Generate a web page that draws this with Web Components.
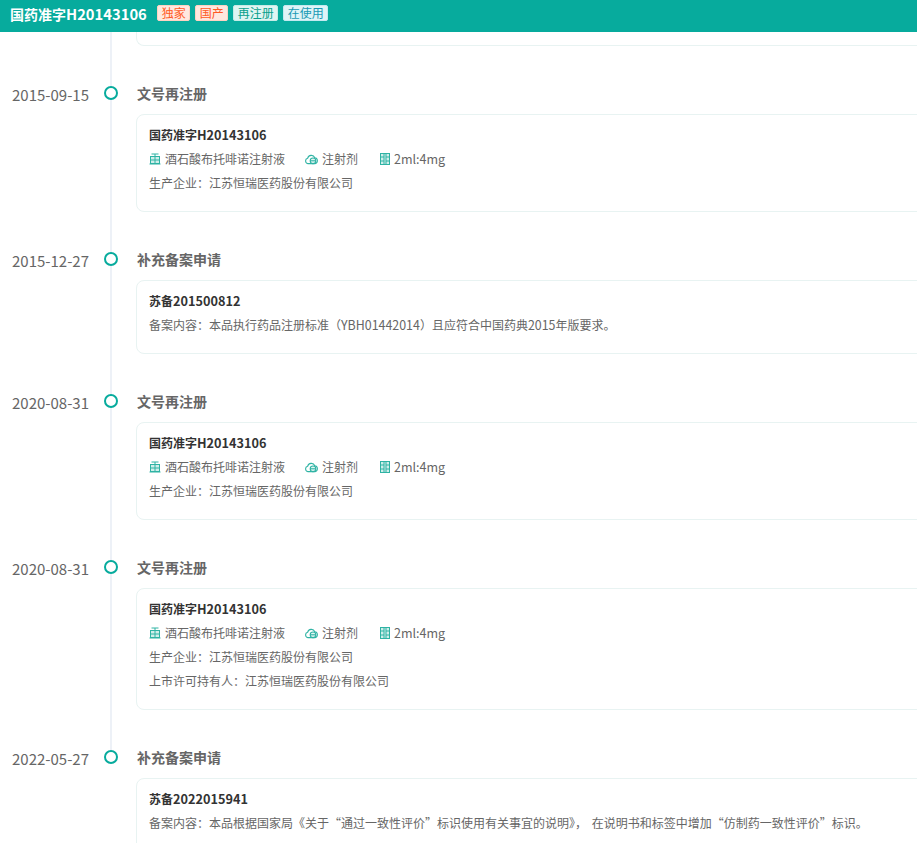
<!DOCTYPE html>
<html lang="zh"><head><meta charset="utf-8">
<style>
html,body{margin:0;padding:0;background:#fff;overflow:hidden}
body{width:917px;height:843px;font-family:"Noto Sans CJK SC","Open Sans",sans-serif;font-size:12px;color:#666;display:flex;flex-direction:column}
</style></head><body>
<app-header code="H20143106">
<x-tag kind="orange">独家</x-tag><x-tag kind="orange">国产</x-tag><x-tag kind="green">再注册</x-tag><x-tag kind="blue">在使用</x-tag>
</app-header>
<time-line>
<x-stub></x-stub>
<time-item date="2015-09-15" heading="文号再注册"><drug-card prefix="国药准字" code="H20143106" name="酒石酸布托啡诺注射液" form="注射剂" spec="2ml:4mg"><p-line>生产企业：江苏恒瑞医药股份有限公司</p-line></drug-card></time-item>
<time-item date="2015-12-27" heading="补充备案申请"><drug-card prefix="苏备" code="201500812"><p-line>备案内容：本品执行药品注册标准（<lat-n>YBH01442014</lat-n>）且应符合中国药典<lat-n>2015</lat-n>年版要求。</p-line></drug-card></time-item>
<time-item date="2020-08-31" heading="文号再注册"><drug-card prefix="国药准字" code="H20143106" name="酒石酸布托啡诺注射液" form="注射剂" spec="2ml:4mg"><p-line>生产企业：江苏恒瑞医药股份有限公司</p-line></drug-card></time-item>
<time-item date="2020-08-31" heading="文号再注册"><drug-card prefix="国药准字" code="H20143106" name="酒石酸布托啡诺注射液" form="注射剂" spec="2ml:4mg"><p-line>生产企业：江苏恒瑞医药股份有限公司</p-line><p-line>上市许可持有人：江苏恒瑞医药股份有限公司</p-line></drug-card></time-item>
<time-item date="2022-05-27" heading="补充备案申请"><drug-card prefix="苏备" code="2022015941"><p-line>备案内容：本品根据国家局《关于“通过一致性评价”标识使用有关事宜的说明》， 在说明书和标签中增加“仿制药一致性评价”标识。</p-line></drug-card></time-item>
</time-line>
<script>
const def=(n,html)=>customElements.define(n,class extends HTMLElement{
  connectedCallback(){ if(this.shadowRoot)return; const s=this.attachShadow({mode:'open'}); s.innerHTML=typeof html==='function'?html(this):html; }
});
def('lat-n',`<style>:host{display:inline;font-size:1.035em}</style><slot></slot>`);
def('app-header',e=>`<style>:host{display:flex;flex:none;height:32px;background:#07ab9d;align-items:center;padding:0 10px 4px;gap:10px;box-sizing:border-box}
b{font-size:14px;font-weight:700;color:#fff;line-height:20px;white-space:nowrap}
b span{font-size:14.75px}
div{display:flex;gap:5px;align-items:center;margin-top:-2px;padding-left:.5px}</style><b>国药准字<span>${e.getAttribute('code')}</span></b><div><slot></slot></div>`);
def('x-tag',e=>{const c={orange:['#ff5a24','#ffe8df','#ffd2c2'],green:['#07a08c','#dff5f2','#c6ebe6'],blue:['#1a9ab5','#dff4f7','#c4e9f0']}[e.getAttribute('kind')];
return `<style>:host{display:block;font-size:12px;line-height:14px;height:16px;box-sizing:border-box;padding:0 3.5px;border:1px solid ${c[2]};border-radius:2px;color:${c[0]};background:${c[1]}}</style><slot></slot>`});
def('time-line',`<style>:host{display:block;flex:1;min-height:0;overflow:hidden;position:relative}
.rail{position:absolute;left:110px;top:0;width:2px;height:718px;background:#edf1f7}</style><div class="rail"></div><slot></slot>`);
def('x-stub',`<style>:host{display:block;margin-left:136px;height:14px;box-sizing:border-box;border:1px solid #e8f3f2;border-top:0;border-right:0;border-radius:0 0 0 8px;margin-bottom:38px}</style>`);
def('time-item',e=>`<style>:host{display:grid;grid-template-columns:90px 1fr;column-gap:46px;margin-bottom:38px;position:relative}
.d{font-size:15px;line-height:20px;color:#666;padding-left:12px;white-space:nowrap;margin-top:1px}
.h{font-size:14px;font-weight:700;line-height:18px;color:#666;padding:0 0 12px 1px}
.dot{position:absolute;left:104px;top:2px;width:14px;height:14px;box-sizing:border-box;border:2.5px solid #07ab9d;border-radius:50%;background:#fff}
</style><div class="d">${e.getAttribute('date')}</div><div><div class="h">${e.getAttribute('heading')}</div><slot></slot></div><i class="dot"></i>`);
const icons={
 name:`<svg width="12" height="12" viewBox="0 0 12 12" fill="none" stroke="#2fb3a4" stroke-width="1"><rect x="1.500" y="3.500" width="9" height="7" fill="#cfeeea"/><path d="M2.500 1H9.500M6 1V10.500M1.500 7H10.500M.5 11H11.500"/></svg>`,
 form:`<svg width="13" height="12" viewBox="0 0 13 12" fill="none" stroke="#2fb3a4" stroke-width="1.100"><path d="M3.200 10.600A2.700 2.700 0 0 1 2.600 5.300A3.800 3.800 0 0 1 9.800 4.700A3 3 0 0 1 10 10.600Z"/><circle cx="8" cy="7.800" r="2.800" fill="#e4f6f3"/><path d="M5.200 7.800H10.800"/></svg>`,
 spec:`<svg width="12" height="12" viewBox="0 0 12 12" fill="none" stroke="#2fb3a4" stroke-width="1"><rect x="2.500" y=".5" width="9" height="11" fill="#cfeeea"/><path d="M6 .5V11.500M8 .5V11.500M2.500 4H6M8 4H11.500M2.500 8H6M8 8H11.500"/></svg>`};
def('drug-card',e=>{const a=n=>e.getAttribute(n);
const meta=a('name')?`<div class="m"><span class="i">${icons.name}${a('name')}</span><span class="i">${icons.form}${a('form')}</span><span class="i">${icons.spec}<span class="s">${a('spec')}</span></span></div>`:'';
return `<style>:host{display:block;box-sizing:border-box;width:800px;border:1px solid #e8f3f2;border-radius:8px;padding:8px 12px 16px}
.c{font-size:12px;font-weight:700;line-height:24px;color:#333}
.c span{font-size:12.7px}
.s{font-size:12.5px}
.m{display:flex;gap:20px;line-height:24px;height:24px;font-size:12px;color:#666}
.i{display:flex;align-items:center;gap:4px}</style><div class="c">${a('prefix')}<span>${a('code')}</span></div>${meta}<slot></slot>`});
def('p-line',`<style>:host{display:block;font-size:12px;line-height:24px;color:#666;white-space:nowrap;word-spacing:2px}</style><slot></slot>`);
</script>
</body></html>
